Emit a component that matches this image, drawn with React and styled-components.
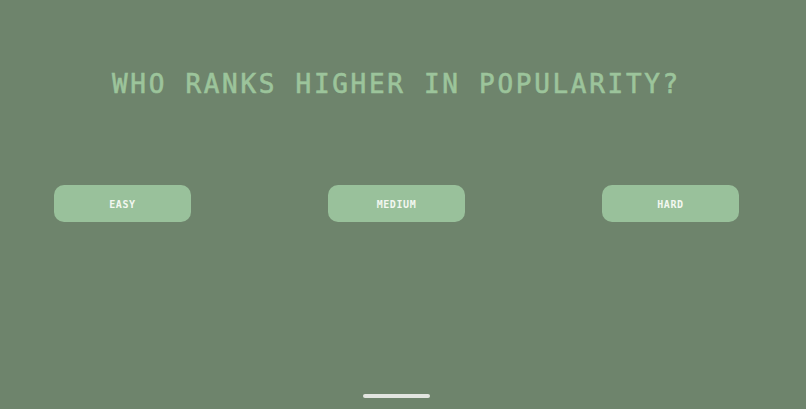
import React from "react";
import styled, { createGlobalStyle } from "styled-components";

const Global = createGlobalStyle`
  html, body { margin: 0; padding: 0; }
  body { background: #6e846c; }
`;

const Screen = styled.div`
  width: 806px;
  height: 409px;
  background: #6e846c;
  display: flex;
  flex-direction: column;
  align-items: stretch;
  overflow: hidden;
`;

const Title = styled.h1`
  margin: 69px 0 0 0;
  padding-left: 112px;
  font-family: "DejaVu Sans Mono", monospace;
  font-size: 26px;
  font-weight: normal;
  -webkit-text-stroke: 0.6px #9cc49b;
  letter-spacing: 2.7px;
  color: #9cc49b;
  line-height: 30px;
  white-space: nowrap;
`;

const Row = styled.div`
  display: flex;
  gap: 137px;
  padding-left: 54px;
  margin-top: 86px;
`;

const Button = styled.button`
  width: 137px;
  height: 37px;
  border: none;
  border-radius: 10px;
  background: #99c19b;
  color: #f2f7f0;
  font-family: "DejaVu Sans Mono", monospace;
  font-weight: bold;
  font-size: 10px;
  letter-spacing: 0.6px;
  display: flex;
  align-items: center;
  justify-content: center;
  padding: 1px 0 0 0;
  cursor: pointer;
`;

const Spacer = styled.div`
  flex: 1;
`;

const HomeBar = styled.div`
  align-self: flex-start;
  margin-left: 363px;
  margin-bottom: 11px;
  width: 67px;
  height: 4px;
  border-radius: 2px;
  background: #e2e5e0;
`;

export default function App() {
  return (
    <>
      <Global />
      <Screen>
        <Title>WHO RANKS HIGHER IN POPULARITY?</Title>
        <Row>
          <Button>EASY</Button>
          <Button>MEDIUM</Button>
          <Button>HARD</Button>
        </Row>
        <Spacer />
        <HomeBar />
      </Screen>
    </>
  );
}
